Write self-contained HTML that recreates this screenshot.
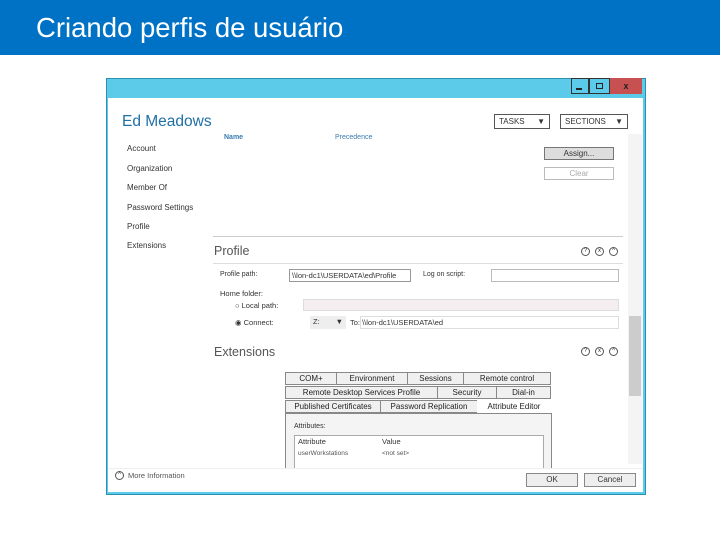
<!DOCTYPE html>
<html><head><style>
*{margin:0;padding:0;box-sizing:border-box}
body{width:720px;height:540px;background:#fff;font-family:"Liberation Sans",sans-serif;position:relative;overflow:hidden}
.a{position:absolute}
.s{font-size:8px;color:#333;white-space:nowrap}
.tab{position:absolute;height:13px;border:1px solid #888;background:#f0f0f0;font-size:8px;color:#222;text-align:center;line-height:11px;white-space:nowrap}
.ic{position:absolute;width:9px;height:9px;border:1px solid #555;border-radius:50%;font-size:6px;line-height:7px;text-align:center;color:#333}
</style></head><body>
<div class="a" style="left:0;top:0;width:720px;height:55px;background:#0072c6"></div>
<div class="a" style="left:36px;top:12px;font-size:27.5px;color:#fff;font-family:'Liberation Sans',sans-serif">Criando perfis de usuário</div>

<div class="a" style="left:106px;top:78px;width:540px;height:417px;background:#5ccbea;border:1px solid #2a8fb0"></div>
<div class="a" style="left:108px;top:98px;width:535px;height:394px;background:#fff"></div>
<div class="a" style="left:571px;top:78px;width:18px;height:16px;border:1px solid #333;background:#5ccbea"></div>
<div class="a" style="left:576px;top:88px;width:6px;height:2px;background:#222"></div>
<div class="a" style="left:589px;top:78px;width:21px;height:16px;border:1px solid #333;background:#5ccbea"></div>
<div class="a" style="left:596px;top:83px;width:7px;height:6px;border:1.5px solid #222"></div>
<div class="a" style="left:610px;top:78px;width:32px;height:16px;background:#c75050;color:#222;font-size:9px;text-align:center;line-height:16px;font-weight:bold">x</div>

<div class="a" style="left:122px;top:113px;font-size:15.5px;color:#1e6fa5;font-family:'Liberation Sans',sans-serif">Ed Meadows</div>
<div class="a s" style="left:494px;top:114px;width:56px;height:15px;border:1px solid #555;padding:2px 4px">TASKS<span style="float:right">▼</span></div>
<div class="a s" style="left:560px;top:114px;width:68px;height:15px;border:1px solid #555;padding:2px 4px">SECTIONS<span style="float:right">▼</span></div>
<div class="a" style="left:224px;top:134px;font-size:7px;color:#3a7ab0;font-weight:bold">Name</div>
<div class="a" style="left:335px;top:134px;font-size:7px;color:#3a7ab0">Precedence</div>
<div class="a s" style="left:127px;top:144px">Account</div>
<div class="a s" style="left:127px;top:164px">Organization</div>
<div class="a s" style="left:127px;top:183px">Member Of</div>
<div class="a s" style="left:127px;top:203px">Password Settings</div>
<div class="a s" style="left:127px;top:222px">Profile</div>
<div class="a s" style="left:127px;top:241px">Extensions</div>
<div class="a s" style="left:544px;top:147px;width:70px;height:13px;border:1px solid #777;background:#ddd;text-align:center;line-height:11px">Assign...</div>
<div class="a s" style="left:544px;top:167px;width:70px;height:13px;border:1px solid #bbb;color:#aaa;text-align:center;line-height:11px">Clear</div>
<div class="a" style="left:628px;top:134px;width:14px;height:330px;background:#f4f4f4"></div>
<div class="a" style="left:629px;top:316px;width:12px;height:80px;background:#ccc"></div>

<div class="a" style="left:213px;top:236px;width:410px;height:1px;background:#ccc"></div>
<div class="a" style="left:214px;top:244px;font-size:12.5px;color:#555;font-family:'Liberation Sans',sans-serif">Profile</div>
<div class="ic" style="left:581px;top:247px">?</div><div class="ic" style="left:595px;top:247px">x</div><div class="ic" style="left:609px;top:247px">^</div>
<div class="a" style="left:213px;top:263px;width:410px;height:1px;background:#ddd"></div>
<div class="a s" style="left:220px;top:271px;font-size:7px">Profile path:</div>
<div class="a s" style="left:289px;top:269px;width:122px;height:13px;border:1px solid #999;padding:1px 2px;font-size:7.5px">\\lon-dc1\USERDATA\ed\Profile</div>
<div class="a s" style="left:423px;top:271px;font-size:7px">Log on script:</div>
<div class="a" style="left:491px;top:269px;width:128px;height:13px;border:1px solid #bbb"></div>
<div class="a s" style="left:220px;top:289px;font-size:7.5px">Home folder:</div>
<div class="a s" style="left:235px;top:301px;font-size:7.5px">○ Local path:</div>
<div class="a" style="left:303px;top:299px;width:316px;height:12px;background:#f4eef0;border:1px solid #ddd"></div>
<div class="a s" style="left:235px;top:318px;font-size:7.5px">◉ Connect:</div>
<div class="a s" style="left:310px;top:316px;width:36px;height:13px;background:#eee;padding:1px 3px;font-size:7.5px">Z:<span style="float:right">▼</span></div>
<div class="a s" style="left:350px;top:318px;font-size:7.5px">To: \\lon-dc1\USERDATA\ed</div>
<div class="a" style="left:360px;top:316px;width:259px;height:13px;border:1px solid #ddd"></div>
<div class="a" style="left:214px;top:345px;font-size:12.5px;color:#555;font-family:'Liberation Sans',sans-serif">Extensions</div>
<div class="ic" style="left:581px;top:347px">?</div><div class="ic" style="left:595px;top:347px">x</div><div class="ic" style="left:609px;top:347px">^</div>

<div class="tab" style="left:285px;top:372px;width:52px">COM+</div>
<div class="tab" style="left:336px;top:372px;width:72px">Environment</div>
<div class="tab" style="left:407px;top:372px;width:57px">Sessions</div>
<div class="tab" style="left:463px;top:372px;width:88px">Remote control</div>
<div class="tab" style="left:285px;top:386px;width:153px">Remote Desktop Services Profile</div>
<div class="tab" style="left:437px;top:386px;width:60px">Security</div>
<div class="tab" style="left:496px;top:386px;width:55px">Dial-in</div>
<div class="tab" style="left:285px;top:400px;width:96px">Published Certificates</div>
<div class="tab" style="left:380px;top:400px;width:98px">Password Replication</div>
<div class="tab" style="left:477px;top:400px;width:74px;background:#fff;border-color:#fff">Attribute Editor</div>
<div class="a" style="left:285px;top:413px;width:267px;height:55px;border:1px solid #888;border-bottom:none;background:#f4f4f4"></div>
<div class="a s" style="left:294px;top:423px;font-size:7px">Attributes:</div>
<div class="a" style="left:294px;top:435px;width:250px;height:33px;background:#fff;border:1px solid #aaa;border-bottom:none"></div>
<div class="a s" style="left:298px;top:437px;font-size:7.5px">Attribute</div>
<div class="a s" style="left:382px;top:437px;font-size:7.5px">Value</div>
<div class="a s" style="left:298px;top:450px;font-size:6.5px;color:#555">userWorkstations</div>
<div class="a s" style="left:382px;top:450px;font-size:6.5px;color:#555">&lt;not set&gt;</div>
<div class="a" style="left:108px;top:468px;width:535px;height:24px;background:#fff;border-top:1px solid #eee"></div>
<div class="ic" style="left:115px;top:471px">^</div>
<div class="a s" style="left:128px;top:471px;font-size:7.5px;color:#555">More Information</div>
<div class="a s" style="left:526px;top:473px;width:52px;height:14px;border:1px solid #888;background:#eee;text-align:center;line-height:12px">OK</div>
<div class="a s" style="left:584px;top:473px;width:52px;height:14px;border:1px solid #888;background:#eee;text-align:center;line-height:12px">Cancel</div>
</body></html>
